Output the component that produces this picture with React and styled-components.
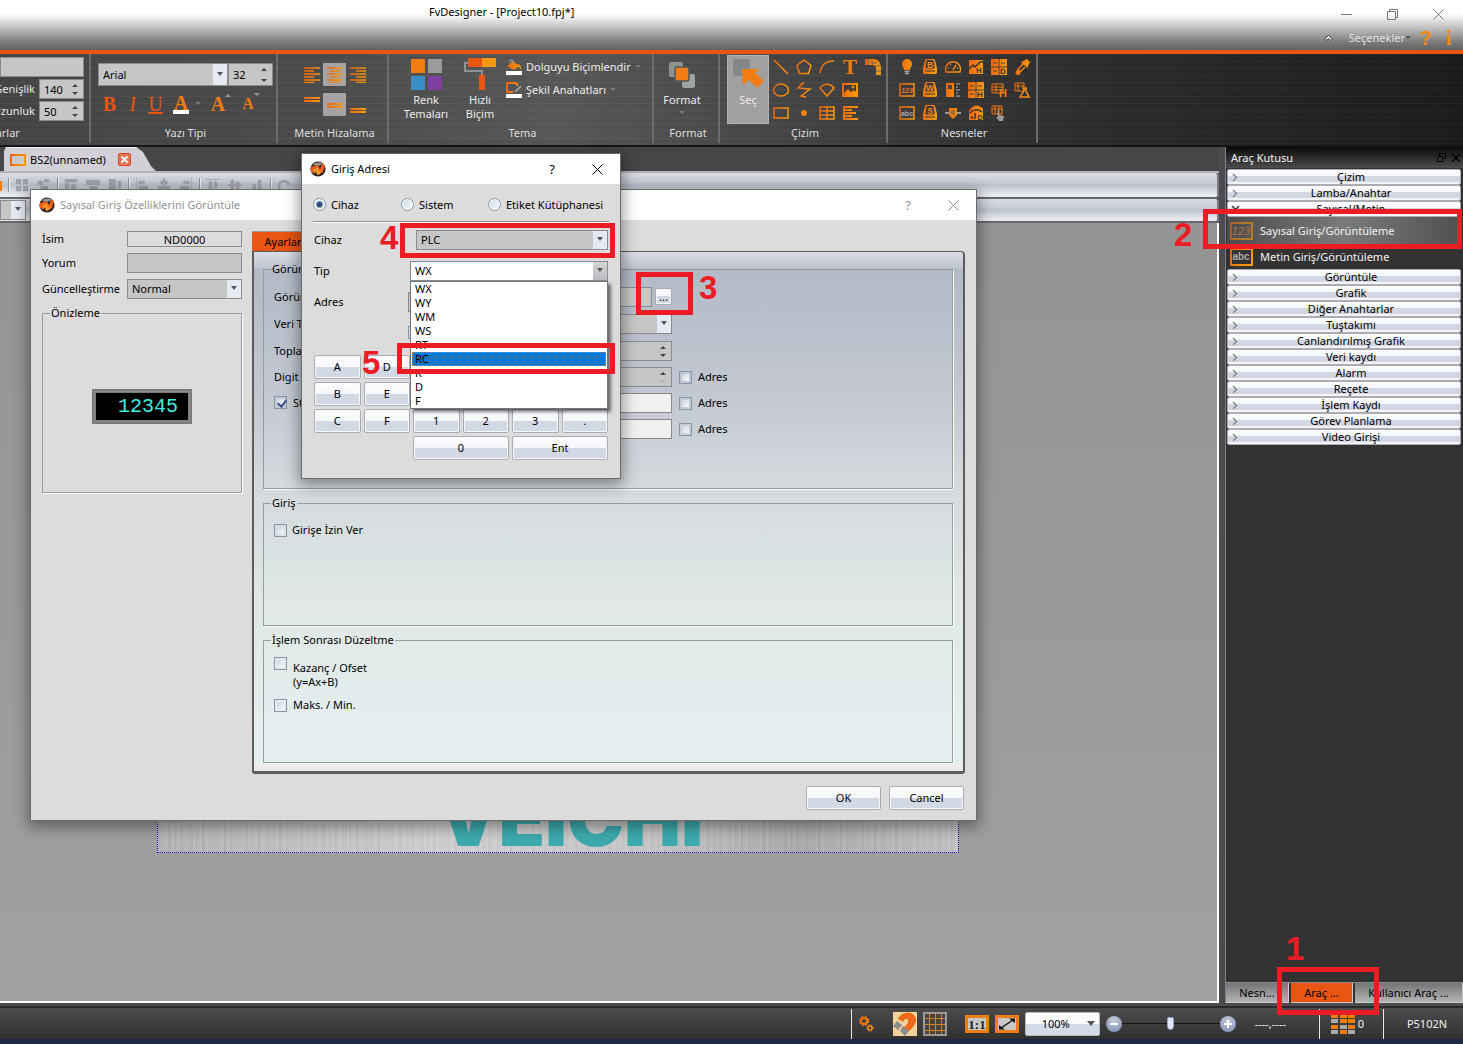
import React from 'react';
import styled, { createGlobalStyle, css } from 'styled-components';

const ORANGE = '#e95513';
const O = 'url(#orange)';

const GlobalStyle = createGlobalStyle`
  * { box-sizing: border-box; }
  body { margin: 0; background: #4a4a4d; overflow: hidden; }
  body, button, input, select, legend, label {
    font: 11px/14px "Noto Sans", "Open Sans", sans-serif;
    color: #000;
  }
  button { padding: 0; border: 0; background: none; white-space: nowrap; }
  svg { display: block; flex: none; }
`;

const Page = styled.div`
  display: flex;
  flex-direction: column;
  height: 100vh;
`;

/* ---------- title bar ---------- */
const TitleBar = styled.header`
  height: 54px;
  flex: none;
  border-bottom: 4px solid ${ORANGE};
  background: linear-gradient(#fff 0, #fff 14px, #c4c4c4 27px, #7c7c7c 42px, #616161 50px);
`;
const TitleRow = styled.div`
  display: flex;
  align-items: center;
  height: 28px;
  padding-right: 19px;
  gap: 35px;
`;
const TitleText = styled.h1`
  flex: 1;
  margin: 0 0 4px;
  padding-left: 429px;
  font-size: 11px;
  line-height: 14px;
  font-weight: 400;
`;
const OptionsRow = styled.div`
  display: flex;
  align-items: center;
  justify-content: flex-end;
  height: 20px;
  padding-right: 3px;
`;
const OptionsButton = styled.button`
  display: flex;
  align-items: center;
  margin: 0 3px 0 16px;
  color: #e2e2e2;
`;
const HelpButton = styled.button`
  width: 23px;
  text-align: center;
  font: 700 20px/20px ${(p) => (p.$serif ? '"Liberation Serif", serif' : '"Liberation Sans", sans-serif')};
  color: #f28a0e;
`;

/* ---------- ribbon ---------- */
const Ribbon = styled.nav`
  display: flex;
  flex: none;
  height: 93px;
  overflow: hidden;
  border-bottom: 2px solid #151515;
  background:
    repeating-linear-gradient(rgba(255, 255, 255, 0.03) 0 1px, transparent 1px 3px, rgba(0, 0, 0, 0.05) 3px 4px, transparent 4px 7px),
    linear-gradient(90deg, #454545, #4c4c4c 22%, #585858 38%, #4a4a4a 50%, #303030 70%, #1c1c1c);
`;
const Group = styled.section`
  display: flex;
  flex-direction: column;
  flex: none;
  width: ${(p) => p.$w}px;
  height: 89px;
  border-right: 2px solid #6c6c6c;
  overflow: hidden;
`;
const GroupBody = styled.div`
  flex: 1;
  display: flex;
  align-items: flex-start;
  padding: ${(p) => p.$pad || '0'};
  gap: ${(p) => p.$gap || 0}px;
`;
const Caption = styled.div`
  height: 17px;
  text-align: ${(p) => (p.$start ? 'left' : 'center')};
  margin-left: ${(p) => (p.$start ? -17 : 0)}px;
  padding-left: ${(p) => p.$shift || 0}px;
  color: #dedede;
`;
const Stack = styled.div`
  display: flex;
  flex-direction: column;
  gap: ${(p) => p.$gap || 0}px;
  padding-top: ${(p) => p.$pt || 0}px;
`;
const Line = styled.div`
  display: flex;
  align-items: center;
  gap: ${(p) => p.$gap || 0}px;
  justify-content: ${(p) => p.$justify || 'flex-start'};
`;
const ClipLabel = styled.label`
  width: 55px;
  margin-left: -16px;
  padding-right: 4px;
  text-align: right;
  color: #e6e6e6;
`;
const RibbonButton = styled.button`
  display: flex;
  flex-direction: column;
  align-items: center;
  gap: ${(p) => p.$gap || 4}px;
  width: ${(p) => p.$w}px;
  padding-top: ${(p) => p.$pt || 0}px;
  color: #ececec;
  ${(p) => p.$active && css`
    height: 69px;
    background: #a29f9f;
    border: 1px solid #b4b2b2;
  `}
`;
const RibbonLink = styled.button`
  display: flex;
  align-items: center;
  gap: 4px;
  height: 23px;
  color: #ececec;
`;
const Letter = styled.button`
  display: flex;
  width: ${(p) => p.$w || 23}px;
  justify-content: center;
  font: ${(p) => p.$font || 'bold'} ${(p) => p.$size || 20}px/22px "Liberation Serif", serif;
  color: ${(p) => p.$color || ORANGE};
  text-decoration: ${(p) => (p.$under ? 'underline' : 'none')};
`;
const ColorLetter = styled(Letter)`
  height: 19px;
  line-height: 17px;
  width: 16px;
  border-bottom: 4px solid #fff;
`;
const AlignButton = styled.button`
  display: grid;
  place-items: center;
  width: 23px;
  height: 23px;
  background: ${(p) => (p.$on ? '#a5a3a4' : 'transparent')};
  border-radius: 1px;
`;
const AlignGrid = styled.div`
  display: grid;
  grid-template-columns: repeat(3, 23px);
  gap: 7px 0;
`;
const IconGrid = styled.div`
  display: grid;
  grid-template-columns: repeat(${(p) => p.$cols}, 23px);
  grid-auto-rows: 23px;
`;
const IconButton = styled.button`
  display: grid;
  place-items: center;
`;

/* ---------- form parts ---------- */
const SelectWrap = styled.span`
  position: relative;
  display: block;
  height: ${(p) => p.$h || 20}px;
  width: ${(p) => (p.$w ? p.$w + 'px' : 'auto')};
  flex: ${(p) => (p.$w ? 'none' : '1')};
  &::after {
    content: '';
    position: absolute;
    right: 5px;
    top: 50%;
    margin-top: -3px;
    border: 3px solid transparent;
    border-top: 4px solid #555;
    border-bottom: 0;
    pointer-events: none;
  }
`;
const SelectInput = styled.select`
  appearance: none;
  width: 100%;
  height: 100%;
  margin: 0;
  padding: 0 16px 0 4px;
  border: 1px solid #8b8b8b;
  border-radius: 0;
  background: linear-gradient(${(p) => (p.$white ? '#d4d4d4, #b9bcc2' : '#e6eaf3, #e6eaf3')}) right / 14px 100% no-repeat ${(p) => (p.$white ? '#fff' : '#c6c6c6')};
`;
function Select({ label, value, w, h, white, id }) {
  return (
    <SelectWrap $w={w} $h={h}>
      <SelectInput aria-label={label} id={id} $white={white} defaultValue={value}>
        <option>{value}</option>
      </SelectInput>
    </SelectWrap>
  );
}
const TextInput = styled.input`
  width: ${(p) => (p.$w ? p.$w + 'px' : '100%')};
  flex: ${(p) => (p.$w ? 'none' : '1')};
  min-width: 0;
  height: ${(p) => p.$h || 20}px;
  margin: 0;
  padding: 0 4px;
  border: 1px solid #8b8b8b;
  background: ${(p) => p.$bg || '#c6c6c6'};
  text-align: ${(p) => (p.$center ? 'center' : 'left')};
`;
const SpinWrap = styled.span`
  position: relative;
  display: flex;
  width: ${(p) => (p.$w ? p.$w + 'px' : 'auto')};
  flex: ${(p) => (p.$w ? 'none' : '1')};
  &::before, &::after {
    content: '';
    position: absolute;
    right: 6px;
    border: 3px solid transparent;
  }
  &::before { top: 5px; border-top: 0; border-bottom: 3px solid #444; }
  &::after { bottom: 4px; border-bottom: 0; border-top: 3px solid ${(p) => (p.$atMin ? '#b4b4b4' : '#444')}; }
`;
function Spin({ label, value, w, h, id, atMin }) {
  return (
    <SpinWrap $w={w} $atMin={atMin}>
      <TextInput id={id} aria-label={label} defaultValue={value} $h={h} />
    </SpinWrap>
  );
}
const Check = styled.input`
  appearance: none;
  position: relative;
  flex: none;
  width: 13px;
  height: 13px;
  margin: 0;
  border: 1px solid #8497aa;
  background: linear-gradient(135deg, #ccd6e2, #fafafa) content-box #f7f7f7;
  padding: 2px;
  &:checked::after {
    content: '';
    position: absolute;
    left: 4px;
    top: 1px;
    width: 4px;
    height: 7px;
    border: solid #36528c;
    border-width: 0 2px 2px 0;
    transform: rotate(40deg);
  }
`;
const Radio = styled.input`
  appearance: none;
  flex: none;
  width: 13px;
  height: 13px;
  margin: 0;
  border: 1px solid #8497aa;
  border-radius: 50%;
  background: ${(p) => (p.defaultChecked ? 'radial-gradient(#2c4678 0 2px, #dfe7f1 4px)' : 'linear-gradient(135deg, #ccd9ea, #f8fafc)')};
  box-shadow: inset 0 0 0 1px #fff;
`;
const CheckLabel = styled.label`
  display: flex;
  align-items: ${(p) => (p.$top ? 'flex-start' : 'center')};
  gap: ${(p) => p.$gap || 6}px;
  white-space: nowrap;
`;
const LowText = styled.span`
  padding-top: 4px;
`;
const PushButton = styled.button`
  height: ${(p) => p.$h || 24}px;
  width: ${(p) => (p.$w ? p.$w + 'px' : 'auto')};
  flex: none;
  grid-column: span ${(p) => p.$span || 1};
  border: 1px solid #a9adb5;
  border-radius: 2px;
  background: linear-gradient(#fcfcfe 0, #f6f7fb 50%, #d2d8e4 50%, #d2d8e4 100%);
  box-shadow: inset 0 0 0 1px #f8f8fa;
`;

/* ---------- workspace ---------- */
const Main = styled.main`
  position: relative;
  flex: 1;
  min-height: 0;
  display: flex;
  background: #4b4b50;
`;
const Workspace = styled.div`
  flex: 1;
  min-width: 0;
  display: flex;
  flex-direction: column;
  margin: 0 6px 3px 0;
`;
const TabStrip = styled.div`
  display: flex;
  flex: none;
  height: 26px;
  padding-left: 4px;
  background: #464646;
  border-bottom: 2px solid #b4b2b8;
`;
const DocTab = styled.button`
  display: flex;
  align-items: center;
  gap: 4px;
  width: 152px;
  padding-left: 6px;
  background: #d3cfd7;
  border-top: 1px solid #eee;
  clip-path: polygon(2px 0, 132px 0, 139px 5px, 147px 19px, 152px 24px, 0 24px, 0 4px);
`;
const DocClose = styled.span`
  display: grid;
  place-items: center;
  width: 13px;
  height: 13px;
  margin-left: 8px;
  border: 1px solid #e0402a;
  border-radius: 2px;
  background: #dc7a5a;
`;
const ToolStrip = styled.div`
  display: flex;
  flex: none;
  align-items: center;
  height: ${(p) => p.$h}px;
  padding-right: 4px;
  border-right: 2px solid #7b7b80;
  border-bottom: 2px solid #67676b;
  border-radius: 0 3px 4px 0;
  background: linear-gradient(#d9dce2, #c9ced9 35%, #bcc2ce 50%, #e6eaee 90%);
`;
const ToolIcons = styled.div`
  display: flex;
  gap: 8px;
  padding: 0 6px;
  border-left: 1px solid #8c9098;
  box-shadow: inset 1px 0 0 #eef0f4;
  color: #9fa3aa;
`;
const Canvas = styled.div`
  flex: 1;
  min-height: 0;
  overflow: hidden;
  padding: 149px 0 0 157px;
  border: solid #fff;
  border-width: 0 2px 2px 0;
  background: linear-gradient(#949494, #9a9a9a 50%, #a1a1a1);
`;
const Artboard = styled.div`
  display: flex;
  align-items: flex-end;
  width: 802px;
  height: 481px;
  padding-left: 280px;
  border: 1px dotted #1212c8;
  color: #3caaae;
  font: 900 76px/68px Inter, "Liberation Sans", sans-serif;
  background:
    repeating-linear-gradient(90deg, rgba(255, 255, 255, 0.08) 0 1px, transparent 1px 3px, rgba(0, 0, 0, 0.03) 3px 4px, transparent 4px 7px),
    repeating-linear-gradient(90deg, rgba(0, 0, 0, 0.03) 0 2px, transparent 2px 11px),
    linear-gradient(90deg, #b4b4b4, #cfcfcf 35%, #c8c8c8 60%, #ababab 80%, #c2c2c2);
`;
const StripSelect = styled.div`
  width: 26px;
`;

/* ---------- dock ---------- */
const Dock = styled.aside`
  position: relative;
  display: flex;
  flex-direction: column;
  flex: none;
  width: 238px;
  margin-bottom: 3px;
  border-left: 1px solid #7d7d85;
  background: #323232;
`;
const DockTitle = styled.h2`
  display: flex;
  align-items: center;
  gap: 6px;
  height: 21px;
  margin: 0;
  padding: 0 3px 0 5px;
  font-size: 11px;
  font-weight: 400;
  color: #f2f2f2;
  background: linear-gradient(#0a0a0a, #4c4c4c);
  span { flex: 1; }
`;
const DockList = styled.div`
  flex: 1;
  display: flex;
  flex-direction: column;
  padding: 1px 2px 0 1px;
`;
const Fold = styled.button`
  display: grid;
  grid-template-columns: 16px 1fr;
  align-items: center;
  height: 16px;
  padding-right: 2px;
  border: 1px solid #abadb3;
  border-radius: 2px;
  line-height: 12px;
  background: linear-gradient(#fbfbfe 0, #f6f7fb 45%, #d1d8e3 45%, #d1d8e3 85%, #f4f4f8 85%);
  svg { margin-left: 3px; }
`;
const ToolItem = styled.button`
  display: flex;
  align-items: center;
  gap: 7px;
  height: ${(p) => (p.$on ? 28 : 24)}px;
  padding-left: 3px;
  color: #f4f4f4;
  background: ${(p) => (p.$on ? 'linear-gradient(90deg, #4c4c4c, #7a7a7a 50%, #505050)' : 'none')};
  svg { opacity: ${(p) => (p.$on ? 0.6 : 1)}; }
`;
const DockTabs = styled.div`
  display: flex;
  gap: 2px;
  height: 21px;
  border-top: 1px solid #8b8b95;
`;
const DockTab = styled.button`
  width: ${(p) => (p.$w ? p.$w + 'px' : 'auto')};
  flex: ${(p) => (p.$w ? 'none' : '1')};
  background: ${(p) => (p.$on ? ORANGE : 'linear-gradient(#747478, #b4b4b4)')};
  border: solid #c8cccc;
  border-width: 0 1px 1px 0;
`;

/* ---------- dialogs ---------- */
const Dialog = styled.section`
  position: absolute;
  left: ${(p) => p.$x}px;
  top: ${(p) => p.$y}px;
  width: ${(p) => p.$w}px;
  border: 1px solid #6c6c6c;
  background: #dcdcdc;
  box-shadow: 0 4px 14px 2px rgba(0, 0, 0, 0.4);
`;
const DialogTitle = styled.header`
  display: flex;
  align-items: center;
  height: 30px;
  padding: 0 16px 0 8px;
  gap: 5px;
  background: #fff;
  color: ${(p) => (p.$dim ? '#929292' : '#000')};
  span { flex: 1; }
`;
const CaptionButton = styled.button`
  display: grid;
  place-items: center;
  width: 40px;
  height: 20px;
  margin-right: ${(p) => (p.$last ? -13 : 0)}px;
  color: inherit;
  font-size: 13px;
`;
const PropBody = styled.div`
  display: grid;
  grid-template-columns: 200px 1fr;
  gap: 10px;
  padding: 11px 11px 0 11px;
`;
const FormRow = styled.div`
  display: flex;
  align-items: center;
  height: ${(p) => p.$h || 26}px;
  label { width: 85px; flex: none; white-space: nowrap; }
`;
const FieldGroup = styled.fieldset`
  min-width: 0;
  height: ${(p) => p.$h}px;
  margin: ${(p) => p.$mt || 0}px 0 ${(p) => p.$mb || 0}px;
  padding: ${(p) => p.$pad || '0 10px'};
  border: 1px solid #9a9a9a;
  box-shadow: 1px 1px 0 #fff;
`;
const Legend = styled.legend`
  margin-left: ${(p) => p.$ml || 0}px;
  padding: 0 1px;
`;
const Preview = styled.div`
  display: grid;
  place-items: center;
  height: 100%;
`;
const Led = styled.output`
  width: 100px;
  height: 35px;
  padding-left: 22px;
  border: 4px solid #7a7a7a;
  outline: 1px solid #8f8f8f;
  outline-offset: -3px;
  background: #000;
  color: #3ff0e0;
  font: 20px/27px "Liberation Mono", monospace;
`;
const PaneTab = styled.button`
  display: block;
  width: 62px;
  height: 20px;
  background: ${ORANGE};
  border-top: 1px solid #9a9a9a;
`;
const Pane = styled.div`
  height: 523px;
  padding: 10px 10px 0 9px;
  border: solid #5c5c5c;
  border-width: 1px 2px 3px 2px;
  border-radius: 0 4px 3px 3px;
  background: linear-gradient(#dadde5 0, #bfc5d1 16px, #b3bac6 17px, #c2c7d1 140px, #d4dadd 235px, #e1e8e7 350px, #e4f0f0 511px, #ebebeb 511px);
`;
const AddressRow = styled.div`
  display: flex;
  align-items: center;
  height: ${(p) => p.$h || 26}px;
  gap: 7px;
`;
const RowLabel = styled.label`
  display: flex;
  gap: 6px;
  width: 160px;
  flex: none;
`;
const FieldSlot = styled.div`
  display: flex;
  align-items: center;
  gap: 3px;
  width: 231px;
`;
const DialogFooter = styled.footer`
  display: flex;
  justify-content: flex-end;
  gap: 8px;
  padding: 12px 12px 10px;
`;
const AddrBody = styled.div`
  padding: 14px 11px 18px;
`;
const RadioRow = styled.div`
  display: grid;
  grid-template-columns: 88px 87px auto;
  height: 24px;
  border-bottom: 1px solid #8f8f8f;
  box-shadow: 0 1px 0 #fff;
`;
const AddrRow = styled.div`
  display: flex;
  align-items: center;
  height: 31px;
  padding: 0 1px;
  label { width: ${(p) => p.$label || 96}px; flex: none; }
`;
const AddrExtra = styled.div`
  height: 38px;
  padding: 9px 0 0 95px;
`;
const Keypad = styled.div`
  display: grid;
  grid-template-columns: repeat(6, 1fr);
  gap: 3px;
  padding: 0 1px;
`;
const KeyGap = styled.span`
  grid-column: span 2;
`;
const Anchor = styled.div`
  position: relative;
  flex: 1;
`;
const Options = styled.ul`
  position: absolute;
  z-index: 1;
  left: 0;
  right: 0;
  top: 20px;
  margin: 0;
  padding: 0 1px;
  list-style: none;
  border: 1px solid #6f7780;
  background: #fff;
  box-shadow: 3px 3px 3px rgba(0, 0, 0, 0.5);
`;
const Option = styled.li`
  height: 14px;
  padding-left: 3px;
  line-height: 14px;
  ${(p) => p.$on && css`
    background: #0078d7;
    outline: 1px dotted #e08020;
    outline-offset: -1px;
  `}
`;

/* ---------- numbered callouts ---------- */
const Callout = styled.div`
  position: absolute;
  z-index: 2;
  left: ${(p) => p.$x}px;
  top: ${(p) => p.$y}px;
  width: ${(p) => p.$w}px;
  height: ${(p) => p.$h}px;
  border: 5px solid #ed1c24;
  pointer-events: none;
`;
const CalloutNumber = styled.b`
  position: absolute;
  z-index: 2;
  left: ${(p) => p.$x}px;
  top: ${(p) => p.$y}px;
  color: #ed1c24;
  font: bold 33px/34px "Liberation Sans", sans-serif;
`;

/* ---------- status bar ---------- */
const StatusBar = styled.footer`
  display: flex;
  flex: none;
  align-items: center;
  justify-content: flex-end;
  height: 38px;
  border-top: 2px solid #2a2a2a;
  border-bottom: 5px solid #1b2a42;
  background: linear-gradient(#4c4c4c, #303030);
  color: #f0f0f0;
`;
const StatusCell = styled.div`
  display: flex;
  align-items: center;
  justify-content: center;
  height: 30px;
  width: ${(p) => (p.$w ? p.$w + 'px' : 'auto')};
  gap: ${(p) => p.$gap || 6}px;
  padding: ${(p) => p.$pad || '0'};
  border-left: 1px solid #e8e8e8;
`;
const StatusText = styled.span`
  padding-left: 13px;
`;
const ZoomBox = styled(SelectWrap)`
  select {
    padding-left: 16px;
    border: 1px solid #b8bac0;
    border-radius: 2px;
    background: linear-gradient(#fbfbfd 50%, #d4dae6 50%);
  }
  &::after { border-width: 5px 4px 0; right: 5px; }
`;
const Round = styled.button`
  display: grid;
  place-items: center;
  width: 16px;
  height: 16px;
  border-radius: 50%;
  background: radial-gradient(circle at 50% 30%, #c8cdd9, #7687ae);
`;
const ZoomSlider = styled.input`
  appearance: none;
  width: 98px;
  height: 16px;
  margin: 0 -6px;
  background: linear-gradient(#161616, #161616) center / 100% 1px no-repeat;
  &::-webkit-slider-thumb {
    appearance: none;
    width: 7px;
    height: 13px;
    border: 1px solid #8fa0c8;
    border-radius: 2px 2px 4px 4px;
    background: #dfe5f2;
  }
`;

/* ---------- icons ---------- */
const Svg = ({ s = 16, w, h, vb = 16, children, ...rest }) => (
  <svg width={w || s} height={h || s} viewBox={typeof vb === 'string' ? vb : `0 0 ${vb} ${vb}`} fill="none" stroke={O} strokeWidth="1.5" aria-hidden="true" {...rest}>
    {children}
  </svg>
);
const T = ({ x = 8, y, s = 8, f = '#333', children }) => (
  <text x={x} y={y} fontSize={s} fontWeight="700" fontFamily="Liberation Sans, sans-serif" textAnchor="middle" fill={f} stroke="none">{children}</text>
);
const Fill = ({ d }) => <path d={d} fill={O} stroke="none" />;
const Caret = ({ c = '#8c8c8c', up }) => (
  <svg width="6" height="4" viewBox="0 0 6 4" aria-hidden="true"><path d={up ? 'M0 4h6L3 1z' : 'M0 0h6L3 3z'} fill={c} /></svg>
);
const Close = ({ s = 11, c = 'currentColor', w = 1 }) => (
  <Svg s={s} vb={11} stroke={c} strokeWidth={w}><path d="M.5.5l10 10M10.500.5l-10 10" /></Svg>
);
const AppIcon = () => (
  <svg width="16" height="16" viewBox="0 0 16 16" aria-hidden="true">
    <circle cx="8" cy="8" r="7.600" fill="#2b2422" />
    <path d="M3 4c2-3 7-3 10-1l-5 2z" fill="#9b9390" />
    <path d="M1 6l7-2-1 3H5l-1 5-3-1zM8 4l2 4 2-5 3 1-2 7-5 3-2-3z" fill="#ee5d1a" />
    <path d="M4 8l4-2 1 5 3-4-2 6-3 1-1-4-2 3z" fill="#f79a2c" />
  </svg>
);
const lampBase = (l) => [
  <Fill key="a" d="M4 0h8l1 1 2 8v5l-1 1H2l-1-1V9l2-8z" />,
  <path key="b" d="M5 1.500h6l1 7.500H4zM3 12h10" fill="#3a3a3a" stroke="#3a3a3a" strokeWidth="1" />,
  <T key="c" y={8.5} s={8.5} f="#f58a1a">{l}</T>,
];
const dataGrid = (l) => [
  <Fill key="a" d="M0 0h16v16H0z" />,
  <path key="b" d="M8 0v16M0 8h16M2 4h4M10 4h4M2 12h4" stroke="#444" strokeWidth="1" />,
  <T key="c" x={12} y={15} s={8}>{l}</T>,
];
const drawIcons = [
  ['Çizgi', <path d="M1 1l14 14" />],
  ['Çokgen', <path d="M8 1l7 5.500-2.500 8h-9L1 6.500z" />],
  ['Yay', <path d="M1 14C2 6 7 2 15 2" />],
  ['Metin', <T y={15} s={21} f="#f07c12"><tspan fontFamily="Liberation Serif, serif">T</tspan></T>],
  ['Boru', [<Fill key="a" d="M0 0h8c6 0 8 4 8 11v5h-5v-5c0-4-1-5-4-5H0z" />, <path key="b" d="M3 0v6M7 1v4l5-2M10 8l5-2M11 12h5" stroke="#666" strokeWidth="1" />]],
  ['Elips', <ellipse cx="8" cy="8" rx="7.500" ry="6" />],
  ['Serbest', <path d="M8 0L2 6l12 1-9 7 5 1" />],
  ['Dilim', <path d="M1 6c4-5 10-5 14 0l-7 8z" />],
  ['Resim', [<Fill key="a" d="M0 1h16v14H0z" />, <path key="b" d="M2 11l4-4 3 3 3-2 2 2v-7H2z" fill="#3c3c3c" stroke="none" />, <circle key="c" cx="11" cy="5" r="1.500" fill={O} stroke="none" />]],
  ['Dikdörtgen', <path d="M1 3h14v10H1z" />],
  ['Nokta', <circle cx="8" cy="8" r="3" fill={O} stroke="none" />],
  ['Tablo', <path d="M1 2h14v12H1zM1 6h14M1 10h14M8 2v12" />],
  ['Ölçek', <path d="M2 1v14M2 2h14M2 5h8M2 8h12M2 11h8M2 14h14" strokeWidth="2" />],
];
const objectIcons = [
  ['Lamba', [<Fill key="a" d="M8 0a5 5 0 0 1 5 5c0 3-2 3-2 6H5c0-3-2-3-2-6a5 5 0 0 1 5-5z" />, <path key="b" d="M5.500 12.500h5M6 14.500h4" stroke="#aaa" />]],
  ['Bit', lampBase('B')],
  ['Gösterge', <path d="M1 13a7.500 7.500 0 1 1 14 0zM8 11l3-5M3 9h1M5 5l1 1M12 9h1" />],
  ['Eğilim', [<Fill key="a" d="M1 1h14v14H1z" />, <path key="b" d="M1 10l4-4 2 2 5-5h3" stroke="#333" />, <T key="c" x={11} y={14}>H</T>]],
  ['Veri', dataGrid('D')],
  ['Damla', [<Fill key="a" d="M9 2l4-2 3 3-2 4 0 2-7-5z" />, <path key="b" d="M9 5l-5 5 1 2 2 0 4-4" strokeWidth="1.500" />, <circle key="c" cx="4" cy="13.500" r="2.500" fill={O} stroke="none" />]],
  ['Sayısal', [<path key="a" d="M1 2h14v12H1z" />, <T key="b" y={11} s={7} f="#e8761a"><tspan fontStyle="italic">123</tspan></T>]],
  ['Word', lampBase('W')],
  ['Seviye', [<Fill key="a" d="M1 1h8v14H1z" />, <path key="b" d="M3 3h4v4H3z" fill="#444" stroke="none" />, <path key="c" d="M11 2h4M11 5h2M11 8h4M11 11h2M11 14h4" stroke="#aaa" strokeWidth="1" />]],
  ['Hesap', dataGrid('H')],
  ['Geçmiş', [<path key="a" d="M1 2h11v9H1zM1 5h11M1 8h11M5 2v9" strokeWidth="1" />, <T key="b" x={12} y={15} s={11} f="#f07c12">H</T>]],
  ['Reçete', [<path key="a" d="M1 1h9v8H1zM1 4h9M4 1v8" strokeWidth="1" />, <path key="b" d="M10 6v3l-4 6h9l-3-6V6M8 6h5" />]],
  ['Metin', [<path key="a" d="M1 2h14v12H1z" />, <T key="b" y={11} s={7} f="#aaa">abc</T>]],
  ['Çoklu', lampBase('S')],
  ['Kaydırıcı', [<path key="a" d="M0 8h16" stroke="#999" strokeWidth="2" />, <Fill key="b" d="M4 3h8v7l-4 4-4-4z" />, <path key="c" d="M7 5v5M9 5v5" stroke="#555" strokeWidth="1" />]],
  ['Grafik', [<Fill key="a" d="M1 6c4-7 10-7 14-2v11H1z" />, <path key="b" d="M4 14v-3M7 14V8M2 8c3-4 8-4 12-1" stroke="#333" />, <T key="c" x={12} y={15} s={7}>D</T>]],
  ['Seçim', [<path key="a" d="M1 1h10v8H1zM1 4h10M4 1v8M8 1v8" strokeWidth="1" />, <path key="b" d="M6 6l2 0v4l5 1-1 5H8l-3-4 2 0z" fill="#999" stroke="none" />]],
];
const boxIcon = (t, dim) => (
  <Svg w={23} h={18} vb="0 0 23 18" strokeWidth="2">
    <path d="M1 1h21v16H1z" />
    {dim
      ? <T x={11} y={13} s={11} f="#e08a4a"><tspan fontStyle="italic" fontWeight="400">{t}</tspan></T>
      : <T x={11} y={12} s={10} f="#aaa">{t}</T>}
  </Svg>
);
const alignH = [
  'M0 1h16M0 4h10M0 7h16M0 10h10M0 13h16M0 15.500h10',
  'M0 1h16M3 4h10M0 7h16M3 10h10M0 13h16M3 15.500h10',
  'M0 1h16M6 4h10M0 7h16M6 10h10M0 13h16M6 15.500h10',
];
const alignV = ['M0 1h16M0 4h16', 'M0 7h16M0 10h16', 'M0 12h16M0 15h16'];
const fadedGroups = [
  [
    'M1 1h6v6H1zM9 1h6v6H9zM1 9h6v6H1zM9 9h6v6H9z',
    'M1 3h6v5H1zM8 1h6v4H8zM4 9h9v5H4z',
  ],
  [
    'M1 1h14v4H1zM1 6h5v9H1zM8 7h6v6H8z',
    'M0 2h16v6H0zM4 9h9v5H4z',
    'M1 1h8v14H1zM11 3h4v9h-4z',
  ],
  [
    'M1 0h1v16H1zM4 3h7v4H4zM4 9h11v4H4z',
    'M7 0h2v16H7zM4 3h8v4H4zM1 9h14v4H1z',
    'M14 0h1v16h-1zM5 3h7v4H5zM1 9h11v4H1z',
  ],
  [
    'M0 1h16v1H0zM3 4h4v11H3zM9 4h4v7H9z',
    'M0 7h16v2H0zM3 2h4v12H3zM9 4h4v8H9z',
    'M0 14h16v1H0zM3 7h4v6H3zM9 2h4v11H9z',
  ],
  ['M1 8a7 6 0 0 1 14 0h-3a4 3 0 0 0-8 0v5H1z'],
];

const foldsTop = ['Çizim', 'Lamba/Anahtar', 'Sayısal/Metin'];
const foldsBottom = ['Görüntüle', 'Grafik', 'Diğer Anahtarlar', 'Tuştakımı', 'Canlandırılmış Grafik', 'Veri kaydı', 'Alarm', 'Reçete', 'İşlem Kaydı', 'Görev Planlama', 'Video Girişi'];
const keys = ['A', 'D', '7', '8', '9', 'BS', 'B', 'E', '4', '5', '6', 'Clr', 'C', 'F', '1', '2', '3', '.'];

function FoldButton({ text, open }) {
  return (
    <Fold aria-expanded={!!open}>
      <Svg w={9} h={9} vb={9} stroke={open ? '#333' : '#8a8a92'} strokeWidth="1.500">
        <path d={open ? 'M1 1l3.500 3.500L8 1' : 'M2 1l3.500 3.500L2 8'} />
      </Svg>
      {text}
    </Fold>
  );
}

function TopBar() {
  return (
    <TitleBar>
      <TitleRow>
        <TitleText>FvDesigner - [Project10.fpj*]</TitleText>
        <button aria-label="Simge durumuna küçült"><Svg s={11} vb={11} stroke="#777" strokeWidth="1"><path d="M0 5.500h11" /></Svg></button>
        <button aria-label="Geri yükle"><Svg s={11} vb={11} stroke="#777" strokeWidth="1"><path d="M.5 2.500h8v8h-8zM2.500 2.500v-2h8v8h-2" /></Svg></button>
        <button aria-label="Kapat"><Close c="#777" /></button>
      </TitleRow>
      <OptionsRow>
        <button aria-label="Şeridi daralt"><Svg w={9} h={6} vb="0 0 9 6" stroke="#333" fill="#fff" strokeWidth="1"><path d="M.5 4l4-3.500 4 3.500-1.500 1.500-2.500-2-2.500 2z" /></Svg></button>
        <OptionsButton>Seçenekler <Caret c="#555" /></OptionsButton>
        <HelpButton aria-label="Yardım">?</HelpButton>
        <HelpButton aria-label="Bilgi" $serif>i</HelpButton>
      </OptionsRow>
    </TitleBar>
  );
}

function IconCell({ icon }) {
  const [name, drawing] = icon;
  return <IconButton aria-label={name}><Svg>{drawing}</Svg></IconButton>;
}

function RibbonBar() {
  return (
    <Ribbon>
      <Group $w={91}>
        <GroupBody $pad="3px 6px 0 0">
          <Stack $gap={2}>
            <TextInput aria-label="Konum" $w={84} />
            <Line><ClipLabel htmlFor="gen">Genişlik</ClipLabel><Spin id="gen" value="140" w={45} /></Line>
            <Line><ClipLabel htmlFor="uz">Uzunluk</ClipLabel><Spin id="uz" value="50" w={45} /></Line>
          </Stack>
        </GroupBody>
        <Caption $start>Ayarlar</Caption>
      </Group>
      <Group $w={187}>
        <GroupBody $pad="9px 0 0 7px">
          <Stack $gap={7}>
            <Line><Select label="Yazı tipi" value="Arial" w={130} h={23} /><Spin label="Boyut" value="32" w={45} h={23} /></Line>
            <Line>
              <Letter aria-label="Kalın">B</Letter>
              <Letter aria-label="İtalik" $font="italic">I</Letter>
              <Letter aria-label="Altı çizili" $font="normal" $under>U</Letter>
              <Line $gap={6}>
                <span />
                <ColorLetter aria-label="Yazı rengi" $color="#f07c12">A</ColorLetter>
                <Caret c="#777" />
              </Line>
              <Letter aria-label="Büyüt" $color="#f07c12" $w={40}>A<Caret c="#999" up /></Letter>
              <Letter aria-label="Küçült" $color="#f07c12" $size={16} $w={20}>A<Caret c="#999" /></Letter>
            </Line>
          </Stack>
        </GroupBody>
        <Caption $shift={4}>Yazı Tipi</Caption>
      </Group>
      <Group $w={111}>
        <GroupBody $pad="9px 0 0 22px">
          <AlignGrid>
            {[...alignH, ...alignV].map((d, i) => (
              <AlignButton key={d} aria-label={'Hizala ' + (i + 1)} $on={i === 1 || i === 4}>
                <Svg strokeWidth={i > 2 ? 2 : 1.5}><path d={d} /></Svg>
              </AlignButton>
            ))}
          </AlignGrid>
        </GroupBody>
        <Caption $shift={4}>Metin Hizalama</Caption>
      </Group>
      <Group $w={265}>
        <GroupBody $pad="1px 0 0 9px">
          <RibbonButton $w={56} $gap={3} $pt={3}>
            <Svg s={32} vb={32} stroke="none">
              <path d="M1 1h14v14H1z" fill="#f07c12" /><path d="M18 1h14v14H18z" fill="#9a9c9b" />
              <path d="M1 18h14v14H1z" fill="#3b8fc4" /><path d="M18 18h14v14H18z" fill="#7d3f9e" />
            </Svg>
            <span>Renk<br />Temaları</span>
          </RibbonButton>
          <RibbonButton $w={52} $gap={3} $pt={3}>
            <Svg s={32} vb={32}>
              <path d="M4 0h28v9H4zM15 17h6v15h-6z" fill={ORANGE} stroke="none" />
              <path d="M18 0h14v9H18z" fill="#f59a10" stroke="none" />
              <path d="M4 5H1v8h17v4" stroke="#8f9396" strokeWidth="2" />
            </Svg>
            <span>Hızlı<br />Biçim</span>
          </RibbonButton>
          <Stack>
            <RibbonLink>
              <Svg>
                <Fill d="M1 7l6-5 6 5-5 4zM11 5c4 0 4 3 4 6l-2-3z" /><path d="M4 4V1h3v4" stroke="#999" strokeWidth="1" /><path d="M0 14h16" stroke="#fff" strokeWidth="4" />
              </Svg>
              Dolguyu Biçimlendir <Caret c="#777" />
            </RibbonLink>
            <RibbonLink>
              <Svg>
                <path d="M10 1H1v9h6M11 4V1" strokeWidth="2" /><path d="M9 10l6-6" stroke="#999" strokeWidth="2" /><path d="M0 14h16" stroke="#fff" strokeWidth="4" />
              </Svg>
              Şekil Anahatları <Caret c="#777" />
            </RibbonLink>
          </Stack>
        </GroupBody>
        <Caption $shift={4}>Tema</Caption>
      </Group>
      <Group $w={66}>
        <GroupBody $pad="7px 0 0 5px">
          <RibbonButton $w={46}>
            <Svg s={28} vb={28} stroke="none">
              <rect x="1" y="1" width="14" height="15" rx="2" fill="#8f9292" /><rect x="14" y="13" width="13" height="14" rx="2" fill="#a0a3a3" />
              <rect x="7" y="6" width="14" height="14" rx="2" fill="#f07c12" stroke="#555" />
            </Svg>
            <span>Format</span>
            <Caret c="#777" />
          </RibbonButton>
        </GroupBody>
        <Caption $shift={4}>Format</Caption>
      </Group>
      <Group $w={168}>
        <GroupBody $pad="1px 0 0 7px">
          <RibbonButton $w={42} $active $gap={2} $pt={3}>
            <Svg s={32} vb={32} stroke="none">
              <rect x="1" y="0" width="17" height="17" rx="2" fill="#858888" />
              <path d="M10 10h17l-4 4 9 8-7 7-8-8-6 5z" fill="#f07c12" />
            </Svg>
            <span>Seç</span>
          </RibbonButton>
          <IconGrid $cols={5}>
            {drawIcons.slice(0, 9).map((icon) => <IconCell key={icon[0]} icon={icon} />)}
            <span />
            {drawIcons.slice(9).map((icon) => <IconCell key={icon[0]} icon={icon} />)}
          </IconGrid>
        </GroupBody>
        <Caption $shift={4}>Çizim</Caption>
      </Group>
      <Group $w={150}>
        <GroupBody $pad="1px 0 0 7px">
          <IconGrid $cols={6}>
            {objectIcons.map((icon, i) => <IconCell key={i} icon={icon} />)}
          </IconGrid>
        </GroupBody>
        <Caption $shift={4}>Nesneler</Caption>
      </Group>
    </Ribbon>
  );
}

function PropertiesDialog() {
  return (
    <Dialog $x={30} $y={42} $w={947}>
      <DialogTitle $dim>
        <AppIcon /><span>Sayısal Giriş Özelliklerini Görüntüle</span>
        <CaptionButton aria-label="Yardım">?</CaptionButton>
        <CaptionButton aria-label="Kapat" $last><Close /></CaptionButton>
      </DialogTitle>
      <PropBody>
        <div>
          <FormRow $h={16}><label htmlFor="isim">İsim</label><TextInput id="isim" defaultValue="ND0000" $h={16} $bg="#dcdcdc" $center /></FormRow>
          <FormRow $h={31}><label htmlFor="yorum">Yorum</label><TextInput id="yorum" /></FormRow>
          <FormRow $h={21}><label htmlFor="gunc">Güncelleştirme</label><Select id="gunc" value="Normal" /></FormRow>
          <FieldGroup $h={187} $mt={7}>
            <Legend $ml={-3}>Önizleme</Legend>
            <Preview><Led>12345</Led></Preview>
          </FieldGroup>
        </div>
        <div>
          <PaneTab>Ayarlar</PaneTab>
          <Pane>
            <FieldGroup $h={227} $mb={7} $pad="7px 10px 0">
              <Legend $ml={-3}>Görüntüle</Legend>
              <AddressRow $h={27}>
                <RowLabel htmlFor="f1">Görüntüle</RowLabel>
                <FieldSlot><TextInput id="f1" /><PushButton $w={17} $h={17} aria-label="Adres seç">...</PushButton></FieldSlot>
              </AddressRow>
              <AddressRow $h={27}>
                <RowLabel htmlFor="f2">Veri Tipi</RowLabel>
                <FieldSlot><Select id="f2" value="" /></FieldSlot>
              </AddressRow>
              <AddressRow $h={27}>
                <RowLabel htmlFor="f3">Toplam</RowLabel>
                <FieldSlot><Spin id="f3" /></FieldSlot>
              </AddressRow>
              <AddressRow>
                <RowLabel htmlFor="f4">Digit</RowLabel>
                <FieldSlot><Spin id="f4" atMin /></FieldSlot>
                <CheckLabel><Check type="checkbox" />Adres</CheckLabel>
              </AddressRow>
              <AddressRow>
                <RowLabel><Check type="checkbox" defaultChecked />Standart</RowLabel>
                <FieldSlot><TextInput aria-label="Alt sınır" $bg="#f0f0f0" /></FieldSlot>
                <CheckLabel><Check type="checkbox" />Adres</CheckLabel>
              </AddressRow>
              <AddressRow>
                <RowLabel as="span" />
                <FieldSlot><TextInput aria-label="Üst sınır" $bg="#f0f0f0" /></FieldSlot>
                <CheckLabel><Check type="checkbox" />Adres</CheckLabel>
              </AddressRow>
            </FieldGroup>
            <FieldGroup $h={130} $mb={7} $pad="13px 10px">
              <Legend $ml={-3}>Giriş</Legend>
              <CheckLabel $gap={5}><Check type="checkbox" />Girişe İzin Ver</CheckLabel>
            </FieldGroup>
            <FieldGroup $h={130} $pad="10px 10px">
              <Legend $ml={-3}>İşlem Sonrası Düzeltme</Legend>
              <Stack $gap={9}>
                <CheckLabel $top><Check type="checkbox" /><LowText>Kazanç / Ofset<br />(y=Ax+B)</LowText></CheckLabel>
                <CheckLabel><Check type="checkbox" />Maks. / Min.</CheckLabel>
              </Stack>
            </FieldGroup>
          </Pane>
        </div>
      </PropBody>
      <DialogFooter>
        <PushButton $w={75}>OK</PushButton>
        <PushButton $w={75}>Cancel</PushButton>
      </DialogFooter>
      <Callout $x={605} $y={82} $w={57} $h={43} />
      <CalloutNumber $x={668} $y={81}>3</CalloutNumber>
    </Dialog>
  );
}

function AddressDialog() {
  return (
    <Dialog $x={301} $y={6} $w={320}>
      <DialogTitle>
        <AppIcon /><span>Giriş Adresi</span>
        <CaptionButton aria-label="Yardım">?</CaptionButton>
        <CaptionButton aria-label="Kapat" $last><Close /></CaptionButton>
      </DialogTitle>
      <AddrBody>
        <RadioRow>
          <CheckLabel $top $gap={5}><Radio type="radio" name="kaynak" defaultChecked />Cihaz</CheckLabel>
          <CheckLabel $top $gap={5}><Radio type="radio" name="kaynak" />Sistem</CheckLabel>
          <CheckLabel $top $gap={5}><Radio type="radio" name="kaynak" />Etiket Kütüphanesi</CheckLabel>
        </RadioRow>
        <Stack $pt={2}>
          <AddrRow $label={102}><label htmlFor="cihaz">Cihaz</label><Select id="cihaz" value="PLC" /></AddrRow>
          <AddrRow>
            <label htmlFor="tip">Tip</label>
            <Anchor>
              <Select id="tip" value="WX" white />
              <Options role="listbox" aria-label="Tip">
                {['WX', 'WY', 'WM', 'WS', 'RT', 'RC', 'R', 'D', 'F'].map((o) => (
                  <Option key={o} role="option" aria-selected={o === 'RC'} $on={o === 'RC'}>{o}</Option>
                ))}
              </Options>
            </Anchor>
          </AddrRow>
          <AddrRow $label={94}><label htmlFor="adres">Adres</label><TextInput id="adres" /></AddrRow>
          <AddrExtra><Check type="checkbox" aria-label="Dizin" /></AddrExtra>
        </Stack>
        <Keypad>
          {keys.map((k) => <PushButton key={k}>{k}</PushButton>)}
          <KeyGap />
          <PushButton $span={2}>0</PushButton>
          <PushButton $span={2}>Ent</PushButton>
        </Keypad>
      </AddrBody>
      <Callout $x={98} $y={69} $w={215} $h={35} />
      <CalloutNumber $x={78} $y={67}>4</CalloutNumber>
      <Callout $x={95} $y={189} $w={218} $h={31} />
      <CalloutNumber $x={60} $y={192}>5</CalloutNumber>
    </Dialog>
  );
}

function Toolbox() {
  return (
    <Dock>
      <DockTitle>
        <span>Araç Kutusu</span>
        <Svg s={9} vb={9} stroke="#000" strokeWidth="1"><path d="M.5 3.500h5v5h-5zM2.500 3V.5h6v5H6" /></Svg>
        <Close s={8} c="#000" w={2} />
      </DockTitle>
      <DockList>
        {foldsTop.map((t, i) => <FoldButton key={t} text={t} open={i === 2} />)}
        <ToolItem $on>{boxIcon('123', true)}Sayısal Giriş/Görüntüleme</ToolItem>
        <ToolItem>{boxIcon('abc')}Metin Giriş/Görüntüleme</ToolItem>
        {foldsBottom.map((t) => <FoldButton key={t} text={t} />)}
      </DockList>
      <DockTabs>
        <DockTab $w={63}>Nesn...</DockTab>
        <DockTab $w={62} $on>Araç ...</DockTab>
        <DockTab>Kullanıcı Araç ...</DockTab>
      </DockTabs>
      <Callout $x={-23} $y={62} $w={259} $h={40} />
      <CalloutNumber $x={-52} $y={71}>2</CalloutNumber>
      <Callout $x={51} $y={820} $w={102} $h={48} />
      <CalloutNumber $x={60} $y={785}>1</CalloutNumber>
    </Dock>
  );
}

function Status() {
  return (
    <StatusBar>
      <StatusCell $pad="0 33px 0 7px">
        <button aria-label="Derle">
          <Svg strokeWidth="2"><circle cx="5" cy="5" r="3" /><circle cx="5" cy="5" r="4.500" strokeDasharray="1.800 1.800" strokeWidth="1.500" /><circle cx="11" cy="12" r="2" strokeWidth="1.500" /><circle cx="11" cy="12" r="3.200" strokeDasharray="1.300 1.300" strokeWidth="1" /></Svg>
        </button>
        <span /><span />
        <button aria-label="Yapıştır">
          <Svg s={24} vb={24} stroke="none"><path d="M0 0h24v24H0z" fill="#f0d49a" /><path d="M5 7C8-1 22-2 23 8c0 5-4 8-8 12l-5-4c3-3 6-5 5-8-1-2-4-1-5 2z" fill="#ee6a16" /><path d="M4 9l5 4-4 5-5-4zM10 14l6 5-4 5-5-5z" fill="#8c8c90" /></Svg>
        </button>
        <button aria-label="Izgara">
          <Svg s={24} vb={24} strokeWidth="1"><path d="M1 1h22v22H1z" stroke="#999" strokeWidth="2" fill="#444" /><path d="M6.500 2v20M12.500 2v20M18.500 2v20M2 6.500h20M2 12.500h20M2 18.500h20" stroke="#e0801a" /></Svg>
        </button>
        <span /><span />
        <button aria-label="Gerçek boyut">
          <Svg w={24} h={18} vb="0 0 24 18" strokeWidth="3"><path d="M1.500 1.500h21v15h-21z" fill="#c8c8c8" stroke="#f07c12" /><T x={12} y={14} s={13} f="#222"><tspan fontFamily="Liberation Serif, serif">1:1</tspan></T></Svg>
        </button>
        <button aria-label="Sığdır">
          <Svg w={24} h={18} vb="0 0 24 18" strokeWidth="3"><path d="M1.500 1.500h21v15h-21z" fill="#c8c8c8" stroke="#f07c12" /><path d="M6 13L18 5" stroke="#111" strokeWidth="1.500" /><path d="M14 3.500h6V8zM4 10v4.500h6z" fill="#111" stroke="none" /></Svg>
        </button>
        <ZoomBox $w={75} $h={24}><SelectInput aria-label="Yakınlaştırma" defaultValue="100%"><option>100%</option></SelectInput></ZoomBox>
        <Round aria-label="Uzaklaştır"><Svg s={10} vb={10} stroke="#fff" strokeWidth="2"><path d="M1 5h8" /></Svg></Round>
        <ZoomSlider type="range" aria-label="Yakınlaştırma düzeyi" />
        <Round aria-label="Yakınlaştır"><Svg s={10} vb={10} stroke="#fff" strokeWidth="2"><path d="M1 5h8M5 1v8" /></Svg></Round>
        <StatusText>----,----</StatusText>
      </StatusCell>
      <StatusCell $w={64} $gap={3} $pad="0 8px 0 0">
        <Svg w={24} h={20} vb="0 0 24 20" strokeWidth="4"><path d="M0 2h7M9 2h7M17 2h7M9 7h7M17 7h7M0 13h7M17 13h7M9 18h7" stroke="#f07c12" /><path d="M0 7h7M9 13h7M0 18h7M17 18h7" stroke="#aaa" /></Svg>
        <span>0</span>
      </StatusCell>
      <StatusCell $w={80} $pad="0 0 0 7px">P5102N</StatusCell>
    </StatusBar>
  );
}

export default function App() {
  return (
    <Page>
      <GlobalStyle />
      <Defs width="0" height="0" aria-hidden="true">
        <defs>
          <linearGradient id="orange" gradientUnits="userSpaceOnUse" x1="0" y1="0" x2="16" y2="4">
            <stop offset="0" stopColor="#ec5f12" /><stop offset="1" stopColor="#f6980e" />
          </linearGradient>
        </defs>
      </Defs>
      <TopBar />
      <RibbonBar />
      <Main>
        <Workspace>
          <TabStrip>
            <DocTab>
              <Svg w={16} h={12} vb="0 0 16 12" strokeWidth="2"><path d="M1 1h14v10H1z" fill="#c9c9c9" /></Svg>
              BS2(unnamed)
              <DocClose><Close s={7} c="#fff" w={3} /></DocClose>
            </DocTab>
          </TabStrip>
          <ToolStrip $h={26}>
            <Svg w={8} h={14} vb="0 0 8 14" stroke="none"><path d="M0 3h2v10H0z" fill="#f07c12" /></Svg>
            {fadedGroups.map((g, i) => (
              <ToolIcons key={i}>
                {g.map((d) => <Svg key={d} s={14} stroke="none"><path d={d} fill="currentColor" /></Svg>)}
              </ToolIcons>
            ))}
          </ToolStrip>
          <ToolStrip $h={24}>
            <StripSelect><Select label="Durum" value="" /></StripSelect>
          </ToolStrip>
          <Canvas><Artboard>VEICHI</Artboard></Canvas>
        </Workspace>
        <Toolbox />
        <PropertiesDialog />
        <AddressDialog />
      </Main>
      <Status />
    </Page>
  );
}

const Defs = styled.svg`
  position: absolute;
`;
